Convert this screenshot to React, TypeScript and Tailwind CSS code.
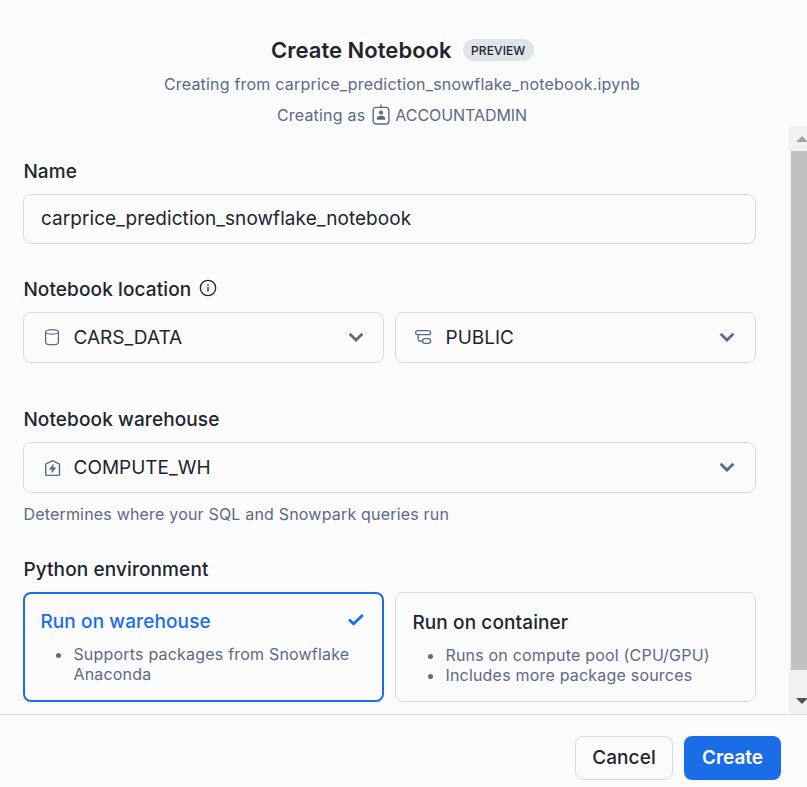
import type { ReactNode } from 'react';

function Chevron() {
  return (
    <svg width="16" height="12" viewBox="0 0 16 12" fill="none" stroke="#5d6a85" strokeWidth="2.7">
      <path d="M1.6 1.8 8 8 14.4 1.8" />
    </svg>
  );
}

function DatabaseIcon() {
  return (
    <svg width="18" height="18" viewBox="0 0 18 18" fill="none" stroke="#5d6a85" strokeWidth="1.3">
      <ellipse cx="9" cy="2.9" rx="6.4" ry="2.2" />
      <path d="M2.6 2.9v10.5c0 1.3 2.9 2.2 6.4 2.2s6.4-.9 6.4-2.2V2.9" />
    </svg>
  );
}

function SchemaIcon() {
  return (
    <svg className="-ml-px mr-px" width="18" height="18" viewBox="0 0 18 18" fill="none" stroke="#5d6a85" strokeWidth="1.3">
      <rect x="1.6" y="1.7" width="15" height="4" rx="2" />
      <rect x="8.6" y="9.7" width="8" height="4.6" rx="2.3" />
      <path d="M4.2 5.7v5.1c0 .8.4 1.2 1.2 1.2h3.2" />
    </svg>
  );
}

function WarehouseIcon() {
  return (
    <svg width="18" height="18" viewBox="0 0 18 18" fill="none" stroke="#5d6a85" strokeWidth="1.4">
      <path d="M2.7 5.2 9.6 1.7l6.9 3.5v10.3c0 .5-.4.9-.9.9h-12c-.5 0-.9-.4-.9-.9z" strokeLinejoin="round" />
      <path d="M10.7 4.6 5.8 10.4h3l-.5 4L13.4 8.6h-3z" fill="#5d6a85" stroke="none" />
    </svg>
  );
}

function RoleIcon() {
  return (
    <svg width="18" height="22" viewBox="0 0 18 22" fill="none" stroke="#5d6a85" strokeWidth="1.4">
      <rect x="1.2" y="3.4" width="15.6" height="16.6" rx="2.8" />
      <path d="M9 .4v4.2" />
      <circle cx="9" cy="8.6" r="2.1" fill="#5d6a85" stroke="none" />
      <path d="M4.8 15.8v-1.4c0-1.6 1.6-2.6 4.2-2.6s4.2 1 4.2 2.6v1.4z" fill="#5d6a85" stroke="none" />
    </svg>
  );
}

function InfoIcon() {
  return (
    <svg className="mb-[2px]" width="18" height="18" viewBox="0 0 18 18" fill="none" stroke="#1e252f" strokeWidth="1.3">
      <circle cx="9" cy="9" r="7.7" />
      <path d="M9 7.8v4.8M9 5.2v1.5" />
    </svg>
  );
}

function SelectBox({ icon, label, wide = false }: { icon: ReactNode; label: string; wide?: boolean }) {
  return (
    <div className={`flex h-[51px] w-full items-center rounded-lg border border-[#d5dae4] pl-[19px] ${wide ? 'pr-5' : 'pr-[19px]'}`}>
      {icon}
      <span className="ml-[12.5px] flex-1 text-[19px] leading-6">{label}</span>
      <Chevron />
    </div>
  );
}

function Label({ children }: { children: ReactNode }) {
  return <div className="flex h-6 items-center pt-0.5 pl-[0.4px] text-[19px] font-medium tracking-[0.11px]">{children}</div>;
}

export default function App() {
  return (
    <div className="flex h-[787px] w-[807px] flex-col overflow-hidden bg-[#fbfbfb] font-['Inter',sans-serif] text-[#1e252f]">
      <header className="flex h-[126px] w-[804px] shrink-0 flex-col items-center pt-[35px] text-base text-[#5d6a85]">
        <div className="flex h-[30px] items-center gap-[11px] pl-px">
          <h1 className="text-[22px] font-semibold tracking-[0.03px] text-[#1e252f]">Create Notebook</h1>
          <span className="flex h-[22px] items-center rounded-full bg-[#dfe3ea] px-[8.5px] pt-px text-[12px] font-medium tracking-[0.1px] text-[#1e252f]">PREVIEW</span>
        </div>
        <p className="mt-[7px] leading-6 tracking-[0.2px]">Creating from carprice_prediction_snowflake_notebook.ipynb</p>
        <p className="mt-[7px] flex items-center leading-6">
          <span className="mr-[7px] tracking-[0.2px]">Creating as</span>
          <RoleIcon />
          <span className="ml-[5px] tracking-[-0.05px]">ACCOUNTADMIN</span>
        </p>
      </header>

      <div className="flex h-[588px] shrink-0">
        <main className="flex w-[789px] flex-col overflow-hidden pt-[33px] pr-[33px] pl-[23px]">
          <Label>Name</Label>
          <div className="mt-[11px] flex h-[50px] shrink-0 items-center rounded-lg border border-[#d5dae4] px-[17px] text-[19px] tracking-[0.06px]">
            carprice_prediction_snowflake_notebook
          </div>

          <div className="mt-[33px] flex items-center gap-2">
            <Label>Notebook location</Label>
            <InfoIcon />
          </div>
          <div className="mt-[11px] grid grid-cols-2 gap-[11px]">
            <SelectBox icon={<DatabaseIcon />} label="CARS_DATA" />
            <SelectBox icon={<SchemaIcon />} label="PUBLIC" wide />
          </div>

          <div className="mt-11">
            <Label>Notebook warehouse</Label>
          </div>
          <div className="mt-[11px]">
            <SelectBox icon={<WarehouseIcon />} label="COMPUTE_WH" wide />
          </div>
          <p className="mt-[9px] pl-[0.4px] text-base leading-6 tracking-[0.19px] text-[#5d6a85]">Determines where your SQL and Snowpark queries run</p>

          <div className="mt-[31px]">
            <Label>Python environment</Label>
          </div>
          <div className="mt-[11px] grid h-[110px] shrink-0 grid-cols-2 gap-[11px]">
            <div className="rounded-lg border-2 border-[#1a6ce7] pt-[15px] pr-[17px] pl-[15px]">
              <div className="flex items-center justify-between text-[#1a6ce7]">
                <Label>Run on warehouse</Label>
                <svg className="mb-[2px]" width="18" height="14" viewBox="0 0 18 14" fill="none" stroke="#1a6ce7" strokeWidth="2.7">
                  <path d="M2 6.6 6.6 10.8 15.8 2" />
                </svg>
              </div>
              <ul className="mt-[11px] list-disc pl-[33.4px] text-base leading-5 tracking-[0.2px] text-[#5d6a85]">
                <li>Supports packages from Snowflake Anaconda</li>
              </ul>
            </div>
            <div className="rounded-lg border border-[#d5dae4] pt-[17px] pr-[17px] pl-4">
              <Label>Run on container</Label>
              <ul className="mt-[11px] list-disc pl-[33.4px] text-base leading-5 tracking-[0.2px] text-[#5d6a85]">
                <li>Runs on compute pool (CPU/GPU)</li>
                <li>Includes more package sources</li>
              </ul>
            </div>
          </div>
        </main>

        <div className="flex w-[18px] flex-col overflow-hidden bg-[#f1f1f1] pl-[2px]">
          <div className="flex h-[25px] shrink-0 items-center pt-px pl-[5px]">
            <svg className="shrink-0" width="13" height="6" viewBox="0 0 13 6" fill="#a3a3a3">
              <path d="M0 6 6 0 12 6z" />
            </svg>
          </div>
          <div className="h-[519px] shrink-0 bg-[#c1c1c1]" />
          <div className="mt-[28px] pl-[5px]">
            <svg className="max-w-none" width="13" height="6" viewBox="0 0 13 6" fill="#505050">
              <path d="M0 0 6 6 12 0z" />
            </svg>
          </div>
        </div>
      </div>

      <footer className="flex h-[73px] shrink-0 justify-end gap-[11px] border-t border-[#d5dae4] pt-[21px] pr-[26px] text-[19px] font-medium">
        <button className="h-11 w-[98px] rounded-lg border border-[#d5dae4] tracking-[0.1px]">Cancel</button>
        <button className="h-11 w-[97px] rounded-lg bg-[#1a6ce7] font-semibold text-white">Create</button>
      </footer>
    </div>
  );
}
